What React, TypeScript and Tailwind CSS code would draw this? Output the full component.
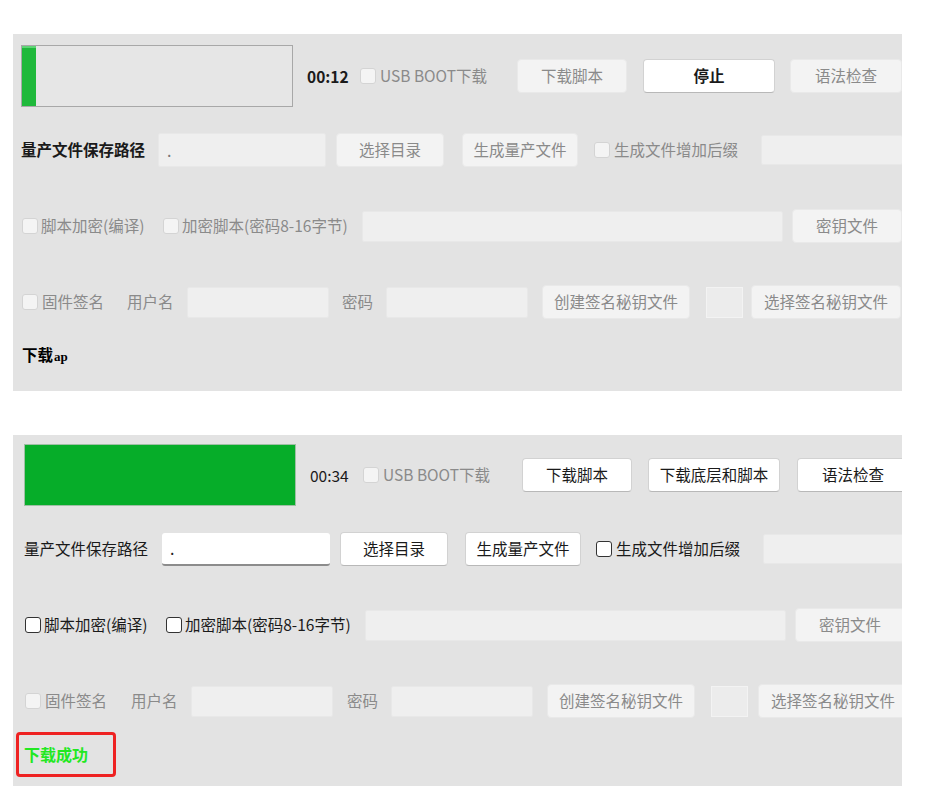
import React from 'react';

const font = { fontFamily: '"Noto Sans CJK SC", "Noto Sans", sans-serif' };

function Check({ enabled }: { enabled?: boolean }) {
  return (
    <span
      className={`inline-block w-[16px] h-[16px] rounded-[3px] shrink-0 ${
        enabled ? 'bg-white border border-[#333]' : 'bg-[#f4f4f4] border border-[#d4d4d4]'
      }`}
    ></span>
  );
}

function Btn({
  children,
  enabled,
  w,
  className = '',
}: {
  children: React.ReactNode;
  enabled?: boolean;
  w: string;
  className?: string;
}) {
  return (
    <div
      className={`${w} h-[34px] shrink-0 flex items-center justify-center rounded-[4px] text-[15.5px] ${
        enabled
          ? 'bg-white border border-[#d2d2d2] border-b-[#b8b8b8] text-[#1a1a1a]'
          : 'bg-[#f3f3f3] border border-[#e9e9e9] text-[#8a8a8a]'
      } ${className}`}
    >
      {children}
    </div>
  );
}

function Field({ w, h = 'h-[31px]', children }: { w: string; h?: string; children?: React.ReactNode }) {
  return (
    <div className={`${w} ${h} shrink-0 bg-[#efefef] border border-[#e8e8e8] rounded-[2px] flex items-center px-2 text-[#777]`}>
      {children}
    </div>
  );
}

// label text with a fixed box so the next control lands where the original app puts it
function Label({ w, dim, bold, children }: { w: string; dim?: boolean; bold?: boolean; children: React.ReactNode }) {
  return (
    <span
      className={`${w} shrink-0 text-[15.5px] whitespace-nowrap ${dim ? 'text-[#8a8a8a]' : 'text-[#1a1a1a]'} ${
        bold ? 'font-semibold' : ''
      }`}
    >
      {children}
    </span>
  );
}

function Panel({ done }: { done?: boolean }) {
  return (
    <div
      className={`w-[889px] bg-[#e3e3e3] overflow-hidden ${done ? 'h-[351px] pl-[11px] pt-[9px]' : 'h-[357px] pl-[8px] pt-[11px]'}`}
      style={font}
    >
      {/* row 1 */}
      <div className="flex items-center h-[62px] whitespace-nowrap">
        {done ? (
          <div className="w-[272px] h-[62px] shrink-0 bg-[#06ad29] border border-[#9fbfa5]"></div>
        ) : (
          <div className="w-[272px] h-[62px] shrink-0 bg-[#e6e6e6] border border-[#a8a8a8] flex">
            <div className="w-[14px] h-full bg-[#1fb93b] border-t-2 border-[#5fd476]"></div>
          </div>
        )}
        <span className="ml-[14px] w-[40px] shrink-0">
          <Label w="w-[40px]" bold={!done}>{done ? '00:34' : '00:12'}</Label>
        </span>
        <span className="ml-[13px] flex items-center">
          <Check />
          <span className="ml-[4px] flex">
            <Label w="w-[113px]" dim>USB BOOT下载</Label>
          </span>
        </span>
        {done ? (
          <>
            <Btn enabled w="w-[110px]" className="ml-[26px]">下载脚本</Btn>
            <Btn enabled w="w-[132px]" className="ml-[16px]">下载底层和脚本</Btn>
            <Btn enabled w="w-[112px]" className="ml-[17px]">语法检查</Btn>
          </>
        ) : (
          <>
            <Btn w="w-[110px]" className="ml-[24px]">下载脚本</Btn>
            <Btn enabled w="w-[132px]" className="ml-[16px] font-semibold">停止</Btn>
            <Btn w="w-[112px]" className="ml-[15px]">语法检查</Btn>
          </>
        )}
      </div>

      {/* row 2 */}
      <div className="flex items-center h-[36px] mt-[25px] whitespace-nowrap">
        <Label w="w-[124px]" bold={!done}>量产文件保存路径</Label>
        {done ? (
          <div className="ml-[14px] w-[168px] h-[33px] shrink-0 bg-white rounded-[3px] border-b-2 border-[#8c8c8c] flex items-center px-2 text-[#222]">
            .
          </div>
        ) : (
          <Field w="w-[168px] ml-[13px]" h="h-[34px]">.</Field>
        )}
        <Btn enabled={done} w="w-[108px]" className="ml-[10px]">选择目录</Btn>
        <Btn enabled={done} w="w-[116px]" className={done ? 'ml-[17px]' : 'ml-[18px]'}>生成量产文件</Btn>
        <span className={`flex items-center ${done ? 'ml-[15px]' : 'ml-[16px]'}`}>
          <Check enabled={done} />
          <span className="ml-[4px] flex">
            <Label w="w-[124px]" dim={!done}>生成文件增加后缀</Label>
          </span>
        </span>
        <Field w="w-[142px] ml-[23px]" h="h-[30px]" />
      </div>

      {/* row 3 */}
      <div className="flex items-center h-[36px] mt-[40px] whitespace-nowrap">
        <span className="flex items-center ml-[1px]">
          <Check enabled={done} />
          <span className="ml-[3px] flex">
            <Label w="w-[104px]" dim={!done}>脚本加密(编译)</Label>
          </span>
        </span>
        <span className="flex items-center ml-[18px]">
          <Check enabled={done} />
          <span className="ml-[3px] flex">
            <Label w="w-[169px]" dim={!done}>加密脚本(密码8-16字节)</Label>
          </span>
        </span>
        <Field w="w-[421px] ml-[11px]" />
        <Btn w="w-[110px]" className="ml-[9px]">密钥文件</Btn>
      </div>

      {/* row 4 */}
      <div className="flex items-center h-[36px] mt-[40px] whitespace-nowrap">
        <span className="flex items-center ml-[1px]">
          <Check />
          <span className="ml-[4px] flex">
            <Label w="w-[62px]" dim>固件签名</Label>
          </span>
        </span>
        <span className={`${done ? 'ml-[24px]' : 'ml-[23px]'} flex`}>
          <Label w="w-[46px]" dim>用户名</Label>
        </span>
        <Field w="w-[142px] ml-[14px]" h="h-[31px]" />
        <span className={`${done ? 'ml-[14px]' : 'ml-[13px]'} flex`}>
          <Label w="w-[31px]" dim>密码</Label>
        </span>
        <Field w="w-[142px] ml-[13px]" h="h-[31px]" />
        <Btn w="w-[148px]" className="ml-[14px]">创建签名秘钥文件</Btn>
        <div className="ml-[16px] w-[37px] h-[31px] shrink-0 bg-[#ececec] border border-[#f3f3f3]"></div>
        <Btn w="w-[150px]" className={done ? 'ml-[10px]' : 'ml-[8px]'}>选择签名秘钥文件</Btn>
      </div>

      {/* row 5 */}
      <div className="mt-[24px] h-[22px] flex items-center">
        {done ? (
          <div className="-ml-[8px] w-[100px] h-[45px] border-[3px] border-[#ee2222] rounded-[4px] flex items-center pl-[5px]">
            <span className="text-[16px] font-bold text-[#22e822]">下载成功</span>
          </div>
        ) : (
          <span className="ml-[1px] flex items-baseline text-black">
            <span className="text-[15.5px] font-bold">下载</span>
            <span className="text-[13px] font-bold ml-[1px]" style={{ fontFamily: '"Liberation Serif", serif' }}>ap</span>
          </span>
        )}
      </div>
    </div>
  );
}

export default function App() {
  return (
    <div className="w-[927px] h-[799px] bg-white pl-[13px] pt-[34px]">
      <Panel />
      <div className="h-[44px]"></div>
      <Panel done />
    </div>
  );
}
